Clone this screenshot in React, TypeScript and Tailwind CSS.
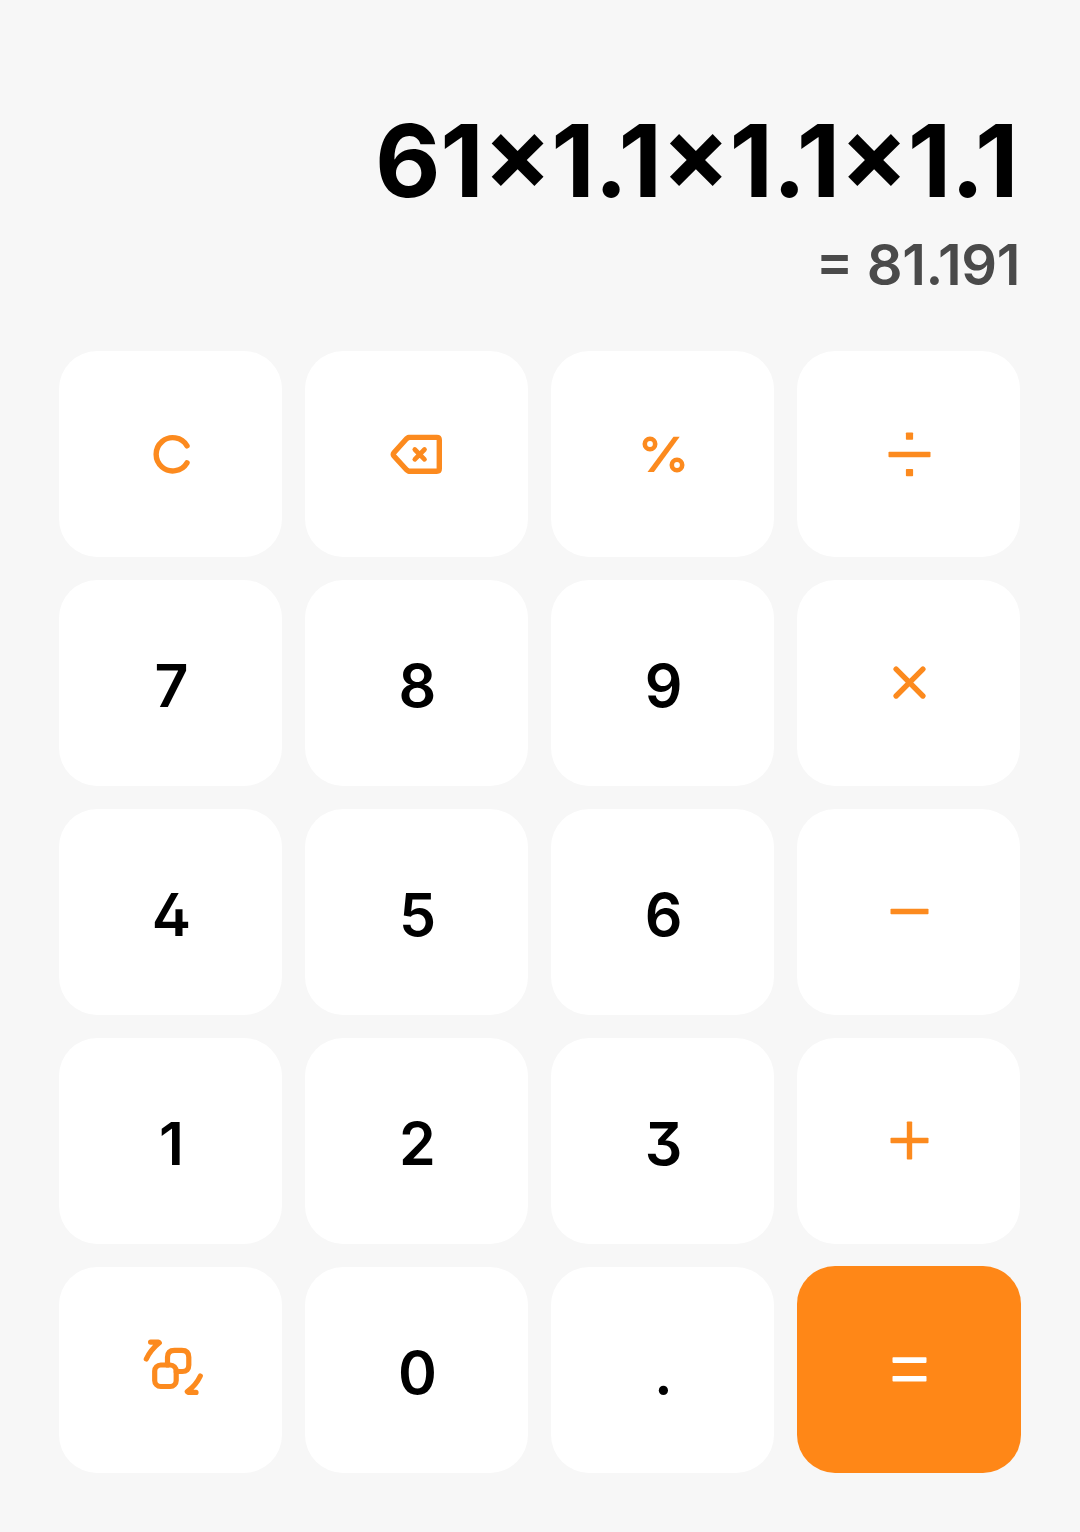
import React from 'react';

// Every icon is drawn on the same 64px box with its origin in the middle
const KeyIcon = ({ children }: { children: React.ReactNode }) => {
    return (
        <svg
            className="h-16 w-16"
            viewBox="-31.5 -32 64 64"
            fill="none"
            stroke="currentColor"
            strokeWidth={5.4}
            strokeLinecap="round"
            strokeLinejoin="round"
            aria-hidden="true"
        >
            {children}
        </svg>
    );
};

const ClearIcon = () => (
    <KeyIcon>
        <path d="M16.5 -8.2A16.6 16.6 0 1 0 16.5 8.8" />
    </KeyIcon>
);

const BackspaceIcon = () => (
    <KeyIcon>
        <path d="M-7.8 -16.6H20.3Q22.8 -16.6 22.8 -14.1V14.7Q22.8 17.2 20.3 17.2H-7.8L-10 15.8L-22.6 2Q-23.8 .4 -22.6 -1.2L-10 -15.2Z" />
        <path strokeWidth={4.7} d="M-1.7 -4.5L8 5.3M8 -4.5L-1.7 5.3" />
    </KeyIcon>
);

const PercentIcon = () => (
    <KeyIcon>
        <circle cx="-12.5" cy="-10" r="5.2" strokeWidth={4.6} />
        <circle cx="14.5" cy="11" r="5.2" strokeWidth={4.6} />
        <path
            fill="currentColor"
            stroke="none"
            d="M11 -17.3H17.2L-8.6 18H-15Z"
        />
    </KeyIcon>
);

const DivideIcon = () => (
    <KeyIcon>
        <g fill="currentColor" stroke="none">
            <rect x="-20" y="-2.2" width="42" height="5.4" rx=".8" />
            <rect x="-2.6" y="-21.5" width="7.2" height="7.2" rx=".8" />
            <rect x="-2.6" y="15" width="7.2" height="7.2" rx=".8" />
        </g>
    </KeyIcon>
);

const MultiplyIcon = () => (
    <KeyIcon>
        <path d="M-12.4 -13.8L14.4 13M14.4 -13.8L-12.4 13" />
    </KeyIcon>
);

const MinusIcon = () => (
    <KeyIcon>
        <g fill="currentColor" stroke="none">
            <rect x="-18" y="-3.2" width="38" height="5.4" rx=".8" />
        </g>
    </KeyIcon>
);

const PlusIcon = () => (
    <KeyIcon>
        <g fill="currentColor" stroke="none">
            <rect x="-18" y="-3.2" width="38" height="5.4" rx=".8" />
            <rect x="-1.7" y="-19.5" width="5.4" height="38" rx=".8" />
        </g>
    </KeyIcon>
);

const EqualsIcon = () => (
    <KeyIcon>
        <g fill="currentColor" stroke="none">
            <rect x="-16" y="-12.7" width="34" height="5.6" rx=".8" />
            <rect x="-16" y="6" width="34" height="5.6" rx=".8" />
        </g>
    </KeyIcon>
);

const ConvertIcon = () => (
    <KeyIcon>
        <g strokeWidth={5.2}>
            <rect x="-15.8" y="-5" width="21.5" height="21.5" rx="6" />
            <path d="M-3 -5V-12.7Q-3 -19.7 4 -19.7H11.3Q18.3 -19.7 18.3 -12.7V-5Q18.3 1.5 11.8 1.5H5.7" />
            <path d="M-24.2 -11Q-20.1 -20 -11.2 -27.2L-12.1 -27.9H-19.9" />
            <path d="M29.8 6Q25.7 15 16.8 21.6L17.7 22.4H25.5" />
        </g>
    </KeyIcon>
);

type Key = {
    label: string;
    icon?: React.ReactNode;
    type?: 'digit' | 'operator' | 'primary';
};

const keys: Key[] = [
    { label: 'Clear', icon: <ClearIcon />, type: 'operator' },
    { label: 'Backspace', icon: <BackspaceIcon />, type: 'operator' },
    { label: 'Percent', icon: <PercentIcon />, type: 'operator' },
    { label: 'Divide', icon: <DivideIcon />, type: 'operator' },
    { label: '7' },
    { label: '8' },
    { label: '9' },
    { label: 'Multiply', icon: <MultiplyIcon />, type: 'operator' },
    { label: '4' },
    { label: '5' },
    { label: '6' },
    { label: 'Subtract', icon: <MinusIcon />, type: 'operator' },
    { label: '1' },
    { label: '2' },
    { label: '3' },
    { label: 'Add', icon: <PlusIcon />, type: 'operator' },
    { label: 'Convert', icon: <ConvertIcon />, type: 'operator' },
    { label: '0' },
    { label: '.' },
    { label: 'Equals', icon: <EqualsIcon />, type: 'primary' },
];

const keyStyles = {
    digit: 'bg-white text-black',
    operator: 'bg-white text-[#fc8a1e]',
    primary: '-mt-px -mr-px h-[207px] bg-[#ff8717] pr-px text-white',
};

const KeyButton = ({ label, icon, type }: Key) => {
    return (
        <button
            type="button"
            aria-label={label}
            className={`flex min-h-[206px] items-center justify-center rounded-[38px] ${
                keyStyles[type || 'digit']
            }`}
        >
            {icon || (
                <span className="pt-1 pl-0.5 text-[59px] leading-none font-[560]">
                    {label}
                </span>
            )}
        </button>
    );
};

const Display = ({
    expression,
    result,
}: {
    expression: string;
    result: string;
}) => {
    return (
        <div className="flex h-[351px] flex-col items-end pt-[110px]">
            <p className="mr-[2px] text-[101px] leading-[100px] font-bold tracking-[-0.5px] text-black">
                {expression}
            </p>
            <p className="mt-[27px] text-[56px] leading-[56px] font-semibold tracking-[-0.4px] text-[#4a4a4a]">
                = {result}
            </p>
        </div>
    );
};

export default function App() {
    return (
        <main className="h-[1532px] w-[1080px] overflow-hidden bg-[#f7f7f7] pr-[60px] pl-[59px] font-['Inter',sans-serif] [font-feature-settings:'calt','cv02','cv09']">
            <Display expression="61×1.1×1.1×1.1" result="81.191" />
            <div className="grid grid-cols-4 gap-[23px]">
                {keys.map((key) => (
                    <KeyButton key={key.label} {...key} />
                ))}
            </div>
        </main>
    );
}
